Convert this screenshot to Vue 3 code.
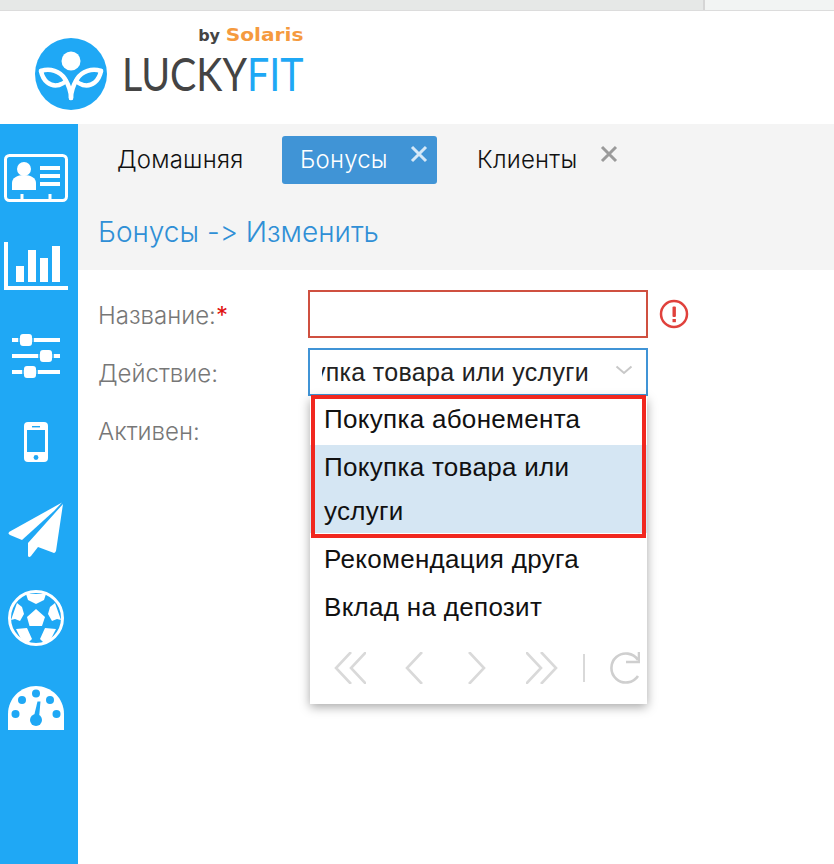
<script setup>
const options = [
  { label: 'Покупка абонемента' },
  { label: 'Покупка товара или услуги', selected: true },
  { label: 'Рекомендация друга' },
  { label: 'Вклад на депозит' }
]
</script>

<template>
  <div class="page">
    <div class="browser-bar"><span class="bar-white"></span></div>

    <header class="logo-row">
      <svg class="logo-mark" width="72" height="72" viewBox="0 0 72 72">
        <circle cx="36" cy="36" r="36" fill="#1fa8f5" />
        <circle cx="36" cy="23" r="9.5" fill="#fff" />
        <g fill="none" stroke="#fff" stroke-width="4.5" stroke-linecap="round">
          <path d="M6 33C15 30 25 33 30 41C33 46 36 52 36 60" />
          <path d="M6 33C8 43 15 49 24 47C27 46 29 45 31 43" />
          <path d="M66 33C57 30 47 33 42 41C39 46 36 52 36 60" />
          <path d="M66 33C64 43 57 49 48 47C45 46 43 45 41 43" />
        </g>
      </svg>
      <div class="logo-text">
        <div class="by">by <span>Solaris</span></div>
        <div class="brand">LUCKY<span>FIT</span></div>
      </div>
    </header>

    <div class="body-row">
      <nav class="sidebar">
        <svg width="64" height="48" viewBox="0 0 64 48">
          <rect x="1.5" y="1.5" width="61" height="45" rx="4" fill="none" stroke="#fff" stroke-width="3" />
          <circle cx="20" cy="15" r="7" fill="#fff" />
          <path d="M8 36V29C8 24 13 21 20 21S32 24 32 29V36Z" fill="#fff" />
          <path d="M36 14H56M36 22H56M36 30H56" stroke="#fff" stroke-width="4" />
          <path d="M18 40V46M46 40V46" stroke="#fff" stroke-width="3" />
        </svg>
        <svg width="64" height="48" viewBox="0 0 64 48">
          <path d="M0 0H4V44H64V48H0Z" fill="#fff" />
          <path d="M12 24H20V40H12ZM24 8H32V40H24ZM36 16H44V40H36ZM48 4H56V40H48Z" fill="#fff" />
        </svg>
        <svg class="wide" width="48" height="44" viewBox="0 0 48 44">
          <path d="M0 6H48M0 22H48M0 38H48" stroke="#fff" stroke-width="4" />
          <rect x="8" y="0" width="12" height="12" rx="3" fill="#fff" stroke="#1fa8f5" stroke-width="0" />
          <path d="M7 0V12M21 0V12M27 16V28M41 16V28M11 32V44M25 32V44" stroke="#1fa8f5" stroke-width="1.5" />
          <rect x="28" y="16" width="12" height="12" rx="3" fill="#fff" />
          <rect x="12" y="32" width="12" height="12" rx="3" fill="#fff" />
        </svg>
        <svg class="wide" width="24" height="40" viewBox="0 0 24 40">
          <rect width="24" height="40" rx="4" fill="#fff" />
          <rect x="3" y="8" width="18" height="22" fill="#1fa8f5" />
          <circle cx="12" cy="35.5" r="2.4" fill="#1fa8f5" />
          <rect x="8" y="4" width="8" height="1.4" fill="#1fa8f5" />
        </svg>
        <svg width="56" height="56" viewBox="0 0 56 56">
          <path d="M54 0.5L1 30Q0 32 2 33L14 38L46 9Z" fill="#fff" />
          <path d="M55 2L20 41V54Q21 56 23 54L30 45L46 51Q47 51 48 49Z" fill="#fff" />
        </svg>
        <svg class="ball" width="56" height="56" viewBox="0 0 56 56">
          <circle cx="28" cy="28" r="26.5" fill="#1fa8f5" stroke="#fff" stroke-width="3" />
          <path d="M28 19L37 27L34 36H21.5L19 27Z" fill="#fff" />
          <path d="M18 4H38L36 10L28 14L20 10Z" fill="#fff" />
          <path d="M3 30L9 13L14 17L16 24L12 31L7 29Z" fill="#fff" />
          <path d="M53 30L47 13L42 17L40 24L44 31L49 29Z" fill="#fff" />
          <path d="M8 39L19 38L24 49L20 53L13 49Z" fill="#fff" />
          <path d="M48 39L37 38L32 49L36 53L43 49Z" fill="#fff" />
        </svg>
        <svg width="56" height="44" viewBox="0 0 56 44">
          <path d="M0 44V28C0 12 13 0 28 0S56 12 56 28V44Z" fill="#fff" />
          <circle cx="28" cy="7.5" r="4" fill="#1fa8f5" />
          <circle cx="14" cy="14" r="4" fill="#1fa8f5" />
          <circle cx="42" cy="14" r="4" fill="#1fa8f5" />
          <circle cx="7.5" cy="28" r="4" fill="#1fa8f5" />
          <circle cx="48.5" cy="28" r="4" fill="#1fa8f5" />
          <circle cx="28" cy="34" r="6" fill="#1fa8f5" />
          <path d="M26 30L29.5 15.5H32.5L31 32Z" fill="#1fa8f5" />
        </svg>
      </nav>

      <main class="main">
        <section class="top-panel">
          <div class="tabs">
            <div class="tab home">Домашняя</div>
            <div class="tab active">
              Бонусы
              <svg class="close" width="18" height="18" viewBox="0 0 18 18"><path d="M2 2L16 16M16 2L2 16" stroke="#d5e8f7" stroke-width="3" /></svg>
            </div>
            <div class="tab clients">
              Клиенты
              <svg class="close" width="18" height="18" viewBox="0 0 18 18"><path d="M2 2L16 16M16 2L2 16" stroke="#9a9a9a" stroke-width="3" /></svg>
            </div>
          </div>
          <h1 class="title">Бонусы -&gt; Изменить</h1>
        </section>

        <section class="form">
          <div class="labels">
            <div class="label">Название:<b>*</b></div>
            <div class="label">Действие:</div>
            <div class="label">Активен:</div>
          </div>
          <div class="fields">
            <div class="name-row">
              <div class="name-input"></div>
              <svg class="alert" width="30" height="30" viewBox="0 0 30 30">
                <circle cx="15" cy="15" r="13" fill="none" stroke="#e0413c" stroke-width="2.5" />
                <rect x="13.5" y="7.5" width="3.4" height="10.5" rx="1" fill="#e0413c" />
                <rect x="13.5" y="20" width="3.4" height="3.2" fill="#e0413c" />
              </svg>
            </div>
            <div class="select-box">
              <div class="select-clip"><span>Покупка товара или услуги</span></div>
              <svg class="chevron" width="18" height="10" viewBox="0 0 18 10">
                <path d="M1.5 1.5L9 8L16.5 1.5" fill="none" stroke="#c8c8c8" stroke-width="2" />
              </svg>
            </div>
            <div class="dropdown">
              <div class="highlight"></div>
              <div v-for="o in options" :key="o.label" class="option" :class="{ selected: o.selected }">{{ o.label }}</div>
              <div class="pager">
                <svg width="32" height="32" viewBox="0 0 32 32"><path d="M17 0L2 16L17 32M32 0L17 16L32 32" fill="none" stroke="#d9d9d9" stroke-width="2.6" /></svg>
                <svg class="prev" width="19" height="32" viewBox="0 0 19 32"><path d="M18 0L3 16L18 32" fill="none" stroke="#d9d9d9" stroke-width="2.6" /></svg>
                <svg class="next" width="19" height="32" viewBox="0 0 19 32"><path d="M1 0L16 16L1 32" fill="none" stroke="#d9d9d9" stroke-width="2.6" /></svg>
                <svg class="last" width="32" height="32" viewBox="0 0 32 32"><path d="M0 0L15 16L0 32M15 0L30 16L15 32" fill="none" stroke="#d9d9d9" stroke-width="2.6" /></svg>
                <span class="sep"></span>
                <svg class="reload" width="33" height="32" viewBox="0 0 33 32"><path d="M31 8A14.5 14.5 0 1 0 31 24" fill="none" stroke="#cfcfcf" stroke-width="2.6" /><path d="M19 10H32V0" fill="none" stroke="#cfcfcf" stroke-width="2.6" /></svg>
              </div>
            </div>
          </div>
        </section>
      </main>
    </div>
  </div>
</template>

<style scoped>
.page {
  width: 834px;
  height: 864px;
  overflow: hidden;
  background: #fff;
  font-family: "Liberation Sans", Arial, sans-serif;
  display: flex;
  flex-direction: column;
}

.browser-bar {
  height: 10px;
  flex: none;
  background: #e6e8e7;
  border-bottom: 1px solid #dcdcdc;
  position: relative;
}

.bar-white {
  position: absolute;
  right: 0;
  top: 0;
  width: 131px;
  height: 10px;
  box-sizing: border-box;
  background: #f2f4f3;
  border-left: 2px solid #d5d5d5;
}

.logo-row {
  height: 113px;
  flex: none;
  display: flex;
  align-items: flex-start;
  padding: 14px 0 0 35px;
  box-sizing: border-box;
}

.logo-mark {
  margin-top: 13px;
}

.logo-text {
  margin-left: 15px;
  width: 181px;
}

.by {
  text-align: right;
  font: bold 16px/20px "DejaVu Sans", sans-serif;
  color: #444;
}

.by span {
  display: inline-block;
  margin-left: 8px;
  font-size: 18px;
  color: #f59a3e;
  transform: scaleX(1.12);
  transform-origin: right;
}

.brand {
  margin-top: 5px;
  font: 46px/46px Lato, sans-serif;
  white-space: nowrap;
  color: #444;
  transform: scaleX(0.855);
  transform-origin: left;
}

.brand span {
  color: #1fa8f5;
}

.body-row {
  flex: 1;
  display: flex;
  min-height: 0;
}

.sidebar {
  width: 78px;
  flex: none;
  box-sizing: border-box;
  background: #1fa8f5;
  display: flex;
  flex-direction: column;
  align-items: center;
  padding: 30px 6px 0 0;
  gap: 40px;
}

.sidebar .wide {
  margin-top: 4px;
}

.sidebar .ball {
  margin-top: -8px;
}

.main {
  flex: 1;
  min-width: 0;
}

.top-panel {
  height: 146px;
  background: #f4f4f4;
  padding-top: 12px;
  box-sizing: border-box;
}

.tabs {
  display: flex;
  align-items: center;
  font-family: Inter, "Liberation Sans", sans-serif;
  font-weight: 300;
  font-size: 24px;
  letter-spacing: 0.2px;
  color: #111;
  padding-left: 39px;
}

.tab {
  height: 48px;
  line-height: 48px;
  position: relative;
}

.home {
  width: 165px;
}

.active {
  width: 155px;
  background: #4094d6;
  color: #fff;
  border-radius: 3px;
  padding-left: 18px;
  box-sizing: border-box;
}

.clients {
  margin-left: 40px;
  width: 142px;
}

.close {
  position: absolute;
  left: 128px;
  top: 9px;
}

.clients .close {
  left: 123px;
}

.title {
  margin: 24px 0 0 20px;
  font-family: Inter, "Liberation Sans", sans-serif;
  font-feature-settings: "calt" 0;
  font-variant-ligatures: none;
  font-size: 28px;
  line-height: 48px;
  font-weight: 300;
  color: #2f8fd6;
}

.form {
  display: flex;
  padding: 20px 0 0 20px;
}

.labels {
  width: 210px;
  padding-top: 2px;
  color: #777;
  font-family: Inter, "Liberation Sans", sans-serif;
  font-weight: 300;
  font-size: 24px;
}

.label {
  height: 58px;
  line-height: 48px;
}

.label b {
  color: #e01010;
}

.fields {
  position: relative;
}

.name-row {
  display: flex;
  align-items: center;
  gap: 11px;
  height: 48px;
  margin-bottom: 10px;
}

.name-input {
  width: 340px;
  height: 48px;
  box-sizing: border-box;
  border: 2px solid #cf5040;
}

.select-box {
  width: 340px;
  height: 48px;
  box-sizing: border-box;
  border: 2px solid #4094d6;
  display: flex;
  align-items: center;
  padding-left: 12px;
  position: relative;
  font-size: 25px;
  letter-spacing: 0.3px;
  color: #222;
}

.select-clip {
  width: 267px;
  display: flex;
  justify-content: flex-end;
  overflow: hidden;
  white-space: nowrap;
}

.chevron {
  position: absolute;
  right: 13px;
  top: 15px;
}

.dropdown {
  position: absolute;
  left: 2px;
  top: 107px;
  width: 337px;
  height: 307px;
  box-sizing: border-box;
  background: #fff;
  box-shadow: 0 3px 10px rgba(0, 0, 0, 0.35);
  font-size: 26px;
  letter-spacing: 0.3px;
  color: #111;
  z-index: 2;
}

.highlight {
  position: absolute;
  left: 1px;
  top: -2px;
  width: 335px;
  height: 143px;
  box-sizing: border-box;
  border: 4px solid #f1271f;
  z-index: 1;
}

.option {
  padding: 0 14px;
  line-height: 44px;
  margin-bottom: 4px;
}

.option.selected {
  background: #d5e6f3;
  padding-right: 40px;
}

.pager {
  display: flex;
  align-items: center;
  padding: 19px 0 0 24px;
}

.prev {
  margin-left: 38px;
}

.next {
  margin-left: 45px;
}

.last {
  margin-left: 39px;
}

.sep {
  width: 2px;
  height: 28px;
  background: #d9d9d9;
  margin-left: 25px;
}

.reload {
  margin-left: 22px;
}
</style>
